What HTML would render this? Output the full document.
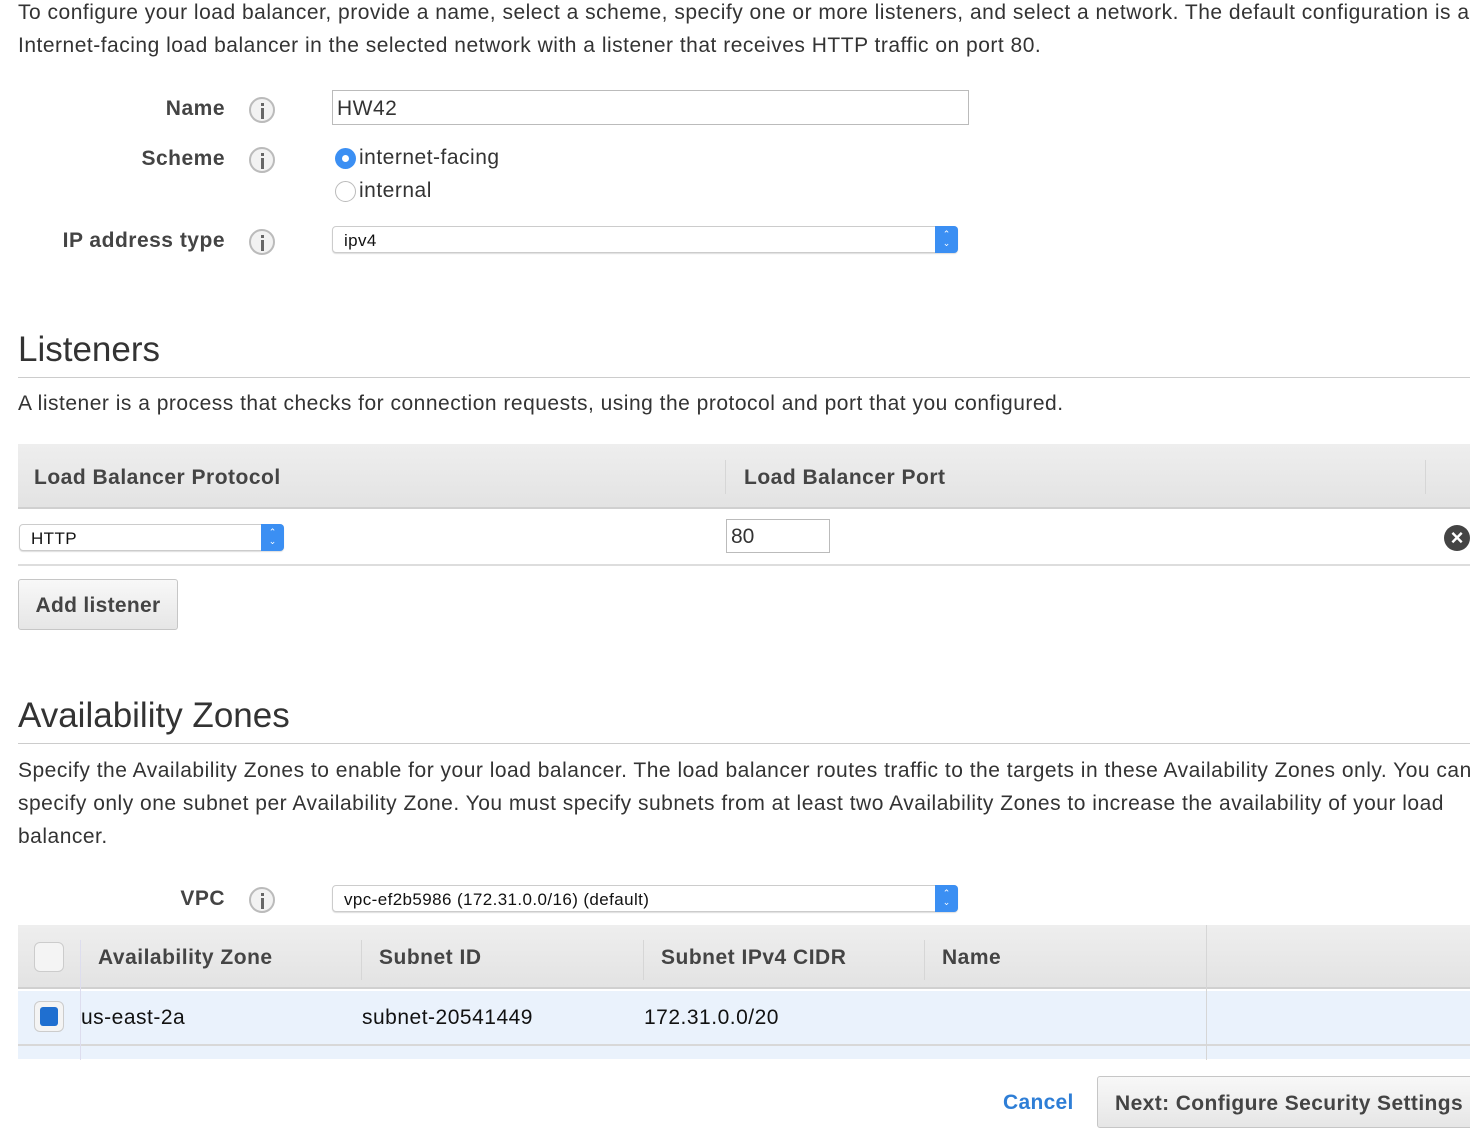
<!DOCTYPE html>
<html><head><meta charset="utf-8"><style>
*{box-sizing:border-box;margin:0;padding:0}
body{width:1470px;height:1130px;overflow:hidden;background:#fff;font-family:"Liberation Sans",Arial,sans-serif;color:#444;position:relative}
.a{position:absolute;white-space:nowrap}
.p{font-size:21px;color:#333;letter-spacing:0.5px}
.lbl{font-size:21px;font-weight:bold;color:#444;text-align:right;width:225px;left:0;letter-spacing:0.5px}
.info{position:absolute;width:26px;height:26px;border-radius:50%;border:2px solid #bbb;background:#f2f2f2;left:249px}
.info:after{content:"";position:absolute;left:10px;top:9px;width:3px;height:11px;background:#666}
.info:before{content:"";position:absolute;left:10px;top:4px;width:3px;height:3px;background:#666}
.h{font-size:35px;color:#333;left:18px}
.hr{position:absolute;left:18px;right:0;height:1px;background:#ccc}
.sel{position:absolute;height:27px;border:1px solid #ccc;border-radius:4px;background:#fff;font-size:17px;color:#111;padding:4px 11px;box-shadow:0 1px 1px #ddd;letter-spacing:0.4px}
.sel .arr{position:absolute;right:-1px;top:-1px;width:23px;height:27px;background:#3b8ff3;border-radius:0 4px 4px 0;color:#fff;font-size:9px;line-height:9px;text-align:center;padding-top:4px;letter-spacing:0}
.th{font-size:21px;font-weight:bold;color:#444;letter-spacing:0.5px}
.vs{position:absolute;width:1px;background:#d6d6d6}
</style></head><body>
<div class="a p" style="left:18px;top:-4px;line-height:33px">To configure your load balancer, provide a name, select a scheme, specify one or more listeners, and select a network. The default configuration is an<br>Internet-facing load balancer in the selected network with a listener that receives HTTP traffic on port 80.</div>

<div class="a lbl" style="top:97px">Name</div><div class="info" style="top:97px"></div>
<div class="a" style="left:332px;top:90px;width:637px;height:35px;border:1px solid #bbb;font-size:21px;color:#333;padding:6px 4px;letter-spacing:0.5px">HW42</div>

<div class="a lbl" style="top:147px">Scheme</div><div class="info" style="top:147px"></div>
<div class="a" style="left:335px;top:148px;width:21px;height:21px;border-radius:50%;background:#3b8ff3"><div style="position:absolute;left:7px;top:7px;width:7px;height:7px;border-radius:50%;background:#fff"></div></div>
<div class="a p" style="left:359px;top:146px">internet-facing</div>
<div class="a" style="left:335px;top:181px;width:21px;height:21px;border-radius:50%;border:1px solid #bbb;background:#fff"></div>
<div class="a p" style="left:359px;top:179px">internal</div>

<div class="a lbl" style="top:229px">IP address type</div><div class="info" style="top:229px"></div>
<div class="sel" style="left:332px;top:226px;width:626px">ipv4<div class="arr">&#8963;<br>&#8964;</div></div>

<div class="a h" style="top:330px">Listeners</div>
<div class="hr" style="top:377px"></div>
<div class="a p" style="left:18px;top:392px">A listener is a process that checks for connection requests, using the protocol and port that you configured.</div>

<div class="a" style="left:18px;top:444px;right:0;height:65px;background:linear-gradient(#eee,#e3e3e3);border-bottom:2px solid #d0d0d0"></div>
<div class="vs" style="left:725px;top:460px;height:34px"></div><div class="vs" style="left:1425px;top:460px;height:34px"></div>
<div class="a th" style="left:34px;top:466px">Load Balancer Protocol</div>
<div class="a th" style="left:744px;top:466px">Load Balancer Port</div>
<div class="sel" style="left:19px;top:524px;width:265px">HTTP<div class="arr">&#8963;<br>&#8964;</div></div>
<div class="a" style="left:726px;top:519px;width:104px;height:34px;border:1px solid #bbb;font-size:21px;color:#333;padding:5px 4px">80</div>
<div class="a" style="left:1444px;top:525px;width:26px;height:26px;border-radius:50%;background:#444;color:#fff;font-size:22px;line-height:26px;text-align:center;font-weight:bold">×</div>
<div class="a" style="left:18px;top:564px;right:0;height:2px;background:#ddd"></div>
<div class="a" style="left:18px;top:579px;width:160px;height:51px;border:1px solid #c6c6c6;border-radius:3px;background:linear-gradient(#f8f8f8,#e6e6e6);font-size:21px;font-weight:bold;color:#444;text-align:center;line-height:52px;letter-spacing:0.3px">Add listener</div>

<div class="a h" style="top:696px">Availability Zones</div>
<div class="hr" style="top:743px"></div>
<div class="a p" style="left:18px;top:754px;line-height:33px">Specify the Availability Zones to enable for your load balancer. The load balancer routes traffic to the targets in these Availability Zones only. You can<br>specify only one subnet per Availability Zone. You must specify subnets from at least two Availability Zones to increase the availability of your load<br>balancer.</div>

<div class="a lbl" style="top:887px">VPC</div><div class="info" style="top:887px"></div>
<div class="sel" style="left:332px;top:885px;width:626px">vpc-ef2b5986 (172.31.0.0/16) (default)<div class="arr">&#8963;<br>&#8964;</div></div>

<div class="a" style="left:18px;top:925px;right:0;height:64px;background:linear-gradient(#eee,#e3e3e3);border-bottom:2px solid #d0d0d0"></div>
<div class="a" style="left:18px;top:991px;right:0;height:68px;background:#eaf2fc"></div>
<div class="a" style="left:18px;top:1044px;right:0;height:2px;background:#d8d8d8"></div>
<div class="vs" style="left:80px;top:940px;height:120px;background:#dde"></div>
<div class="vs" style="left:361px;top:940px;height:40px"></div>
<div class="vs" style="left:643px;top:940px;height:40px"></div>
<div class="vs" style="left:924px;top:940px;height:40px"></div>
<div class="vs" style="left:1206px;top:925px;height:135px"></div>
<div class="a" style="left:34px;top:942px;width:30px;height:30px;border:1px solid #ccc;border-radius:6px;background:#f4f4f4"></div>
<div class="a th" style="left:98px;top:946px">Availability Zone</div>
<div class="a th" style="left:379px;top:946px">Subnet ID</div>
<div class="a th" style="left:661px;top:946px">Subnet IPv4 CIDR</div>
<div class="a th" style="left:942px;top:946px">Name</div>
<div class="a" style="left:34px;top:1001px;width:30px;height:31px;border:1px solid #ccc;border-radius:6px;background:#f4f4f4"><div style="position:absolute;left:5px;top:5px;width:18px;height:19px;border-radius:3px;background:#1f6fd0"></div></div>
<div class="a p" style="left:81px;top:1006px;color:#111">us-east-2a</div>
<div class="a p" style="left:362px;top:1006px;color:#111">subnet-20541449</div>
<div class="a p" style="left:644px;top:1006px;color:#111">172.31.0.0/20</div>

<div class="a" style="left:1003px;top:1091px;font-size:21px;font-weight:bold;color:#2e7ed6;letter-spacing:0.3px">Cancel</div>
<div class="a" style="left:1097px;top:1076px;width:380px;height:52px;border:1px solid #c6c6c6;border-radius:3px;background:linear-gradient(#f8f8f8,#e6e6e6);font-size:21px;font-weight:bold;color:#444;padding:15px 0 0 17px;letter-spacing:0.4px">Next: Configure Security Settings</div>
</body></html>
